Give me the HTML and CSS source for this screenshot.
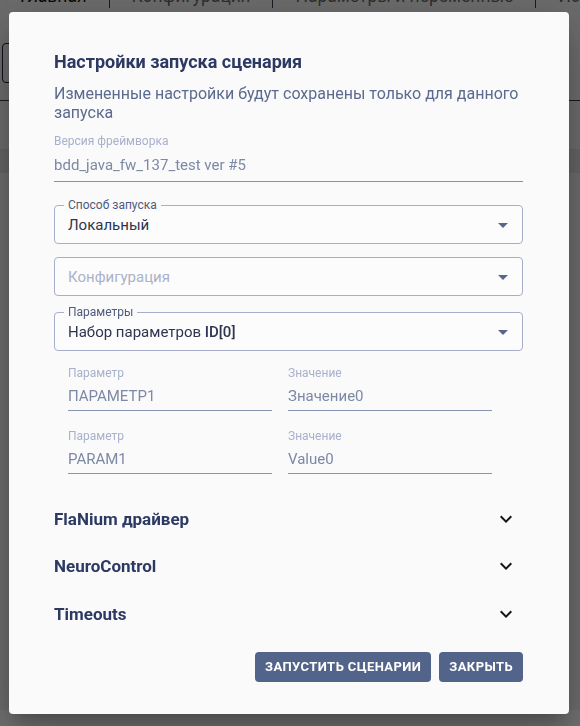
FILE: index.html
```html
<!DOCTYPE html>
<html lang="ru">
<head>
<meta charset="utf-8">
<link rel="stylesheet" href="styles.css">
</head>
<body>
<div class="page">
  <nav class="tabs">
    <span class="tab tab-active">Главная</span>
    <span class="tab">Конфигурация</span>
    <span class="tab">Параметры и переменные</span>
    <span class="tab">История</span>
  </nav>
  <div class="page-toolbar">
    <div class="page-input"></div>
  </div>
  <div class="page-band"></div>
</div>

<div class="overlay">
  <div class="modal">
    <h2 class="title">Настройки запуска сценария</h2>
    <p class="subtitle">Измененные настройки будут сохранены только для данного запуска</p>

    <div class="line-field">
      <div class="line-label">Версия фреймворка</div>
      <div class="line-value">bdd_java_fw_137_test ver #5</div>
    </div>

    <div class="select select-first">
      <span class="float-label">Способ запуска</span>
      <span class="select-value">Локальный</span>
      <span class="caret"></span>
    </div>

    <div class="select select-second">
      <span class="select-value placeholder">Конфигурация</span>
      <span class="caret"></span>
    </div>

    <div class="select select-third">
      <span class="float-label">Параметры</span>
      <span class="select-value">Набор параметров <b>ID[0]</b></span>
      <span class="caret"></span>
    </div>

    <div class="params">
      <div class="line-field small">
        <div class="line-label">Параметр</div>
        <div class="line-value">ПАРАМЕТР1</div>
      </div>
      <div class="line-field small">
        <div class="line-label">Значение</div>
        <div class="line-value">Значение0</div>
      </div>
      <div class="line-field small">
        <div class="line-label">Параметр</div>
        <div class="line-value">PARAM1</div>
      </div>
      <div class="line-field small">
        <div class="line-label">Значение</div>
        <div class="line-value">Value0</div>
      </div>
    </div>

    <div class="accordions">
      <div class="acc">
        <span>FlaNium драйвер</span>
        <svg class="chev" viewBox="0 0 24 24" width="24" height="24"><path d="M16.59 8.59 12 13.17 7.41 8.59 6 10l6 6 6-6z"/></svg>
      </div>
      <div class="acc">
        <span>NeuroControl</span>
        <svg class="chev" viewBox="0 0 24 24" width="24" height="24"><path d="M16.59 8.59 12 13.17 7.41 8.59 6 10l6 6 6-6z"/></svg>
      </div>
      <div class="acc">
        <span>Timeouts</span>
        <svg class="chev" viewBox="0 0 24 24" width="24" height="24"><path d="M16.59 8.59 12 13.17 7.41 8.59 6 10l6 6 6-6z"/></svg>
      </div>
    </div>

    <div class="actions">
      <button class="btn">Запустить сценарии</button>
      <button class="btn">Закрыть</button>
    </div>
  </div>
</div>
</body>
</html>
```

FILE: styles.css
```css
* { box-sizing: border-box; }

html, body {
  margin: 0;
  padding: 0;
  height: 100%;
  overflow: hidden;
}

body {
  font-family: Roboto, "Noto Sans", "Liberation Sans", sans-serif;
  background: #ffffff;
}

.page {
  height: 100%;
  background: #f4f4f4;
}

.tabs {
  display: flex;
  align-items: flex-start;
  height: 26px;
  margin-top: -16px;
  padding-left: 20px;
  font-size: 17.5px;
  line-height: 24px;
  color: #6a6a6a;
  white-space: nowrap;
}

.tab {
  padding-right: 22px;
  margin-right: 22px;
  border-right: 1px solid #3a3d55;
}

.tab-active {
  color: #111;
}

.tab:last-child {
  border-right: none;
}

.page-toolbar {
  height: 91px;
  padding: 33px 0 0 2px;
  border-bottom: 1px solid #353a50;
}

.page-input {
  width: 200px;
  height: 40px;
  border: 1px solid #1c2033;
  border-radius: 4px;
}

.page-band {
  margin-top: 48px;
  height: 24px;
  background: #e2e2e2;
}

.overlay {
  position: fixed;
  inset: 0;
  background: rgba(0, 0, 0, 0.56);
}

.modal {
  position: absolute;
  left: 9px;
  top: 12px;
  width: 560px;
  height: 702px;
  background: #fafafa;
  border-radius: 4px;
  padding: 38px 46px 0 45px;
  box-shadow: 0 11px 15px -7px rgba(0,0,0,.2), 0 24px 38px 3px rgba(0,0,0,.14), 0 9px 46px 8px rgba(0,0,0,.12);
  color: #2f3a5c;
}

.title {
  margin: 0;
  font-size: 18px;
  line-height: 24px;
  font-weight: 700;
  color: #2c3a63;
}

.subtitle {
  margin: 10px 0 0;
  font-size: 16px;
  line-height: 19px;
  color: #5b6a8f;
}

.line-field {
  margin-top: 12px;
  border-bottom: 1px solid #8491b0;
  padding-bottom: 5px;
}

.line-label {
  font-size: 12px;
  line-height: 14px;
  color: #a8b0cc;
}

.line-value {
  margin-top: 7px;
  font-size: 15px;
  line-height: 21px;
  color: #7c88a6;
}

.select {
  position: relative;
  height: 39px;
  border: 1px solid #a6aecb;
  border-radius: 4px;
  display: flex;
  align-items: center;
  padding: 0 14px 0 13px;
  background: #fcfcfc;
}

.select-first { margin-top: 23px; }
.select-second { margin-top: 13px; }
.select-third { margin-top: 16px; }

.float-label {
  position: absolute;
  left: 9px;
  top: -8px;
  padding: 0 4px;
  font-size: 12px;
  line-height: 14px;
  color: #4f5a7c;
  background: #fafafa;
}

.select-value {
  flex: 1;
  font-size: 15px;
  line-height: 20px;
  color: #2d3550;
}

.select-value b {
  font-weight: 500;
}

.placeholder {
  color: #abb2c9;
}

.caret {
  width: 0;
  height: 0;
  border-left: 5px solid transparent;
  border-right: 5px solid transparent;
  border-top: 5px solid #59668a;
  margin-top: 1px;
}

.params {
  display: grid;
  grid-template-columns: 204px 204px;
  column-gap: 16px;
  row-gap: 0;
  padding-left: 14px;
}

.params .line-field {
  border-bottom: 1px solid #8894b2;
  padding-bottom: 2px;
}

.params .line-field:nth-child(n+3) {
  margin-top: 18px;
}

.params .line-field:nth-child(-n+2) {
  margin-top: 15px;
}

.params .line-value {
  margin-top: 4px;
  line-height: 24px;
}

.accordions {
  margin-top: 21px;
}

.acc {
  height: 47.5px;
  display: flex;
  align-items: center;
  justify-content: space-between;
  padding-right: 5px;
  font-size: 17px;
  font-weight: 700;
  color: #2c3a63;
}

.chev {
  fill: #161616;
}

.actions {
  margin-top: 14px;
  display: flex;
  justify-content: flex-end;
  gap: 8px;
}

.btn {
  height: 30px;
  padding: 0 10px;
  border: none;
  border-radius: 4px;
  background: #53648b;
  color: #ffffff;
  font-family: Roboto, "Noto Sans", "Liberation Sans", sans-serif;
  font-size: 13px;
  font-weight: 700;
  letter-spacing: 0.4px;
  text-transform: uppercase;
}
```
